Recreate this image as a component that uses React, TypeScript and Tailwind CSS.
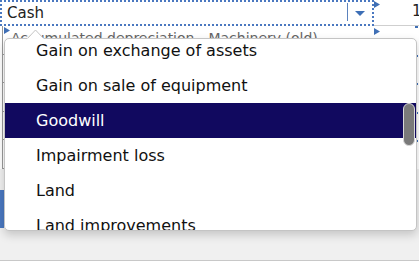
import React from 'react'

const items = [
    'Gain on exchange of assets',
    'Gain on sale of equipment',
    'Goodwill',
    'Impairment loss',
    'Land',
    'Land improvements',
]

function Marker() {
    return (
        <svg width="6" height="7" viewBox="0 0 6 7" className="shrink-0">
            <polygon points="0,0 6,3.5 0,7" fill="#3f6fb5" />
        </svg>
    )
}

function Row({ label }: { label?: string }) {
    return (
        <div className="flex h-[28.5px]">
            <div className="ml-[2px] flex w-[372px] shrink-0 items-start gap-[1px] border-b border-l border-[#9a9a9a] pl-[1px] pt-[1px]">
                {label && <Marker />}
                {label && (
                    <span className="mt-[3px] whitespace-nowrap text-[14px] leading-[16px] text-[#666]">{label}</span>
                )}
            </div>
            <div className="flex w-[41px] shrink-0 items-start border-b border-[#cfcfcf] pt-[2px]">
                <Marker />
            </div>
            <div className="flex-1">
                <div className="h-[2px] w-[3px] bg-[#3f6fb5]" />
            </div>
        </div>
    )
}

export default function App() {
    const selected = 'Goodwill'

    return (
        <div className="relative h-[268px] w-[419px] overflow-hidden bg-white font-['DejaVu_Sans',sans-serif]">
            <div className="flex h-[261px] flex-col border-b border-[#c8c8c8] bg-[#f0f0f0]">
                <div className="bg-white">
                    {/* selected account row */}
                    <div className="flex h-[26px]">
                        <div className="flex w-[374px] shrink-0 items-center border-2 border-dotted border-[#4a78c0] pl-[5px]">
                            <span className="flex-1 text-[15px] text-[#222]">Cash</span>
                            <div className="mt-[1px] h-[18px] w-px self-start bg-[#5b82bd]" />
                            <div className="flex w-[24px] justify-center">
                                <svg width="10" height="5" viewBox="0 0 10 5">
                                    <polygon points="0,0 10,0 5,5" fill="#3d6fb6" />
                                </svg>
                            </div>
                        </div>
                        <div className="flex flex-1 items-start border-b border-[#cfcfcf] pt-[1px]">
                            <Marker />
                            <span className="ml-[32px] text-[15px] leading-[20px] text-[#222]">1</span>
                        </div>
                    </div>
                    <Row label="Accumulated depreciation - Machinery (old)" />
                    <Row />
                    <Row />
                    <Row />
                    <Row />
                </div>
                <div className="flex flex-1">
                    <div className="mt-[21px] h-[38px] w-[4px] bg-[#4a78c0]" />
                </div>
            </div>

            {/* dropdown list */}
            <div className="absolute left-[4px] top-[38px] z-10 h-[193px] w-[413px] overflow-hidden rounded-[5px] border border-[#c4c4c4] bg-white shadow-[0_4px_10px_rgba(0,0,0,0.18)]">
                <div className="-mt-[6px]">
                    {items.map(item => (
                        <div
                            key={item}
                            className={
                                item === selected
                                    ? 'flex h-[35px] items-center bg-[#11095f] pl-[31px] text-[16px] text-white'
                                    : 'flex h-[35px] items-center pl-[31px] text-[16px] text-[#111]'
                            }
                        >
                            {item}
                        </div>
                    ))}
                </div>
                <div className="absolute left-[398px] top-[64px] h-[43px] w-[12px] rounded-full border border-[#d8d8d8] bg-[#7a7a7a]" />
            </div>

            {/* notch */}
            <svg className="absolute left-[27px] top-[29px] z-20" width="17" height="11" viewBox="0 0 17 11">
                <polygon points="0,10 8.5,1 17,10" fill="#fff" />
                <polyline points="0,10 8.5,1 17,10" fill="none" stroke="#c4c4c4" strokeWidth="1" />
                <rect x="0" y="9.5" width="17" height="2" fill="#fff" />
            </svg>
        </div>
    )
}
